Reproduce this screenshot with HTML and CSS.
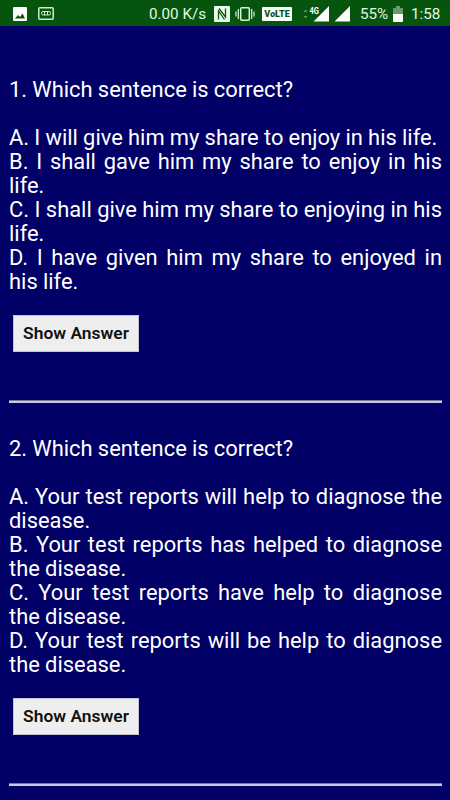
FILE: index.html
```
<!DOCTYPE html>
<html lang="en">
<head>
  <meta charset="UTF-8">
  <meta name="viewport" content="width=device-width, initial-scale=1.0">
  <title>Quiz</title>
  <link rel="stylesheet" href="styles.css">
</head>
<body>
  <header class="status">
    <svg class="picture" width="14" height="14" viewBox="0 0 14 14">
      <rect width="14" height="14" rx="1" fill="#fff"/>
      <path d="M2 11.5L5 8l2 2 2.5-3.5L12 11.5z" fill="#07540f"/>
    </svg>
    <svg class="card" width="16" height="13" viewBox="0 0 16 13">
      <rect x=".8" y=".8" width="14.4" height="11.4" rx="1" fill="none" stroke="#c9efc9" stroke-width="1.5"/>
      <rect x="3.5" y="4.5" width="9" height="3.5" rx="1.5" fill="none" stroke="#c9efc9"/>
      <path d="M6.5 4.5v3.5M9.5 4.5v3.5" stroke="#c9efc9"/>
    </svg>
    <span class="speed">0.00 K/s</span>
    <svg class="nfc" width="16" height="16" viewBox="0 0 16 16">
      <rect width="16" height="16" rx="1" fill="#eaffea"/>
      <path d="M4.500 13.500V5l6 8.500M5 2.500l6.500 8.500V2.500" fill="none" stroke="#07540f" stroke-width="1.3"/>
    </svg>
    <svg class="vibrate" width="20" height="16" viewBox="0 0 20 16">
      <rect x="5.7" y="1.7" width="8.6" height="12.6" rx="1" fill="none" stroke="#d8f5d8" stroke-width="1.5"/>
      <path d="M3.3 3v10M16.7 3v10M1 5.5v5M19 5.5v5" stroke="#d8f5d8" stroke-width="1.2"/>
    </svg>
    <span class="volte">V<i>o</i>LTE</span>
    <svg class="signal" width="56" height="18" viewBox="0 0 56 18">
      <path d="M.5 7l2-2.500 2 2.500zM.5 11l2 2.500 2-2.500z" fill="#5c995c"/>
      <path d="M26 1v15.500H10.500l6-6H17V10zM47 1v15.500H31.500z" fill="#fff"/>
      <text x="6.500" y="8.500" class="network" textLength="9.500" lengthAdjust="spacingAndGlyphs">4G</text>
    </svg>
    <span class="percent">55%</span>
    <svg class="battery" width="10" height="16" viewBox="0 0 10 16">
      <path d="M3 0h4v2h3v6H0V2h3z" fill="#679b67"/>
      <path d="M0 8h10v7q0 1-1 1H1q-1 0-1-1z" fill="#fff"/>
    </svg>
    <span class="time">1:58</span>
  </header>

  <main class="quiz">
    <section class="question">
      <p>1. Which sentence is correct?</p>
      <p>A. I will give him my share to enjoy in his life.</p>
      <p>B. I shall gave him my share to enjoy in his life.</p>
      <p>C. I shall give him my share to enjoying in his life.</p>
      <p>D. I have given him my share to enjoyed in his life.</p>
      <button>Show Answer</button>
    </section>
    <hr>
    <section class="question">
      <p>2. Which sentence is correct?</p>
      <p>A. Your test reports will help to diagnose the disease.</p>
      <p>B. Your test reports has helped to diagnose the disease.</p>
      <p>C. Your test reports have help to diagnose the disease.</p>
      <p>D. Your test reports will be help to diagnose the disease.</p>
      <button>Show Answer</button>
    </section>
    <hr>
  </main>
</body>
</html>
```
FILE: styles.css
```
body {
  margin: 0;
  background-color: #000066;
  color: #fff;
  font-family: Roboto, sans-serif;
}
.status {
  display: flex;
  align-items: center;
  box-sizing: border-box;
  height: 26px;
  padding: 1px 0 0 13px;
  background-color: #07540f;
  color: #e2f8e2;
  font-size: 15.2px;
  white-space: nowrap;
}
.status svg {
  flex: none;
}
.card {
  margin-left: 11px;
}
.speed {
  width: 58px;
  margin-left: 95px;
}
.nfc {
  margin-left: 7px;
}
.vibrate {
  margin-left: 5px;
}
.volte {
  box-sizing: border-box;
  width: 30px;
  height: 14px;
  margin-left: 7px;
  border-radius: 1px;
  background-color: #fff;
  color: #07540f;
  font-size: 9px;
  font-weight: 900;
  line-height: 15px;
  text-align: center;
}
.signal {
  margin-left: 11px;
}
.network {
  fill: #fff;
  font-size: 9.5px;
  font-weight: bold;
}
.percent {
  width: 29px;
  margin-left: 1px;
}
.battery {
  margin-left: 4px;
}
.time {
  margin-left: 8px;
}
.quiz {
  padding: 52px 8px 0 9px;
}
.question {
  font-size: 21.9px;
  line-height: 24px;
  text-align: justify;
  word-spacing: -0.2px;
}
.question p {
  margin: 0;
}
.question p:first-child {
  margin-bottom: 24px;
}
button {
  display: block;
  width: 126px;
  height: 37px;
  margin: 21px 0 0 4px;
  padding: 0 0 2px;
  border: 1px solid #c4c4d4;
  background-color: #eee;
  color: #111;
  font-family: Roboto, sans-serif;
  font-size: 17.4px;
  font-weight: 600;
}
hr {
  box-sizing: border-box;
  height: 3px;
  margin: 48px 0 34px;
  border: 0;
  border-top: 1px solid #77779f;
  background-color: #c8c8e4;
}
```
